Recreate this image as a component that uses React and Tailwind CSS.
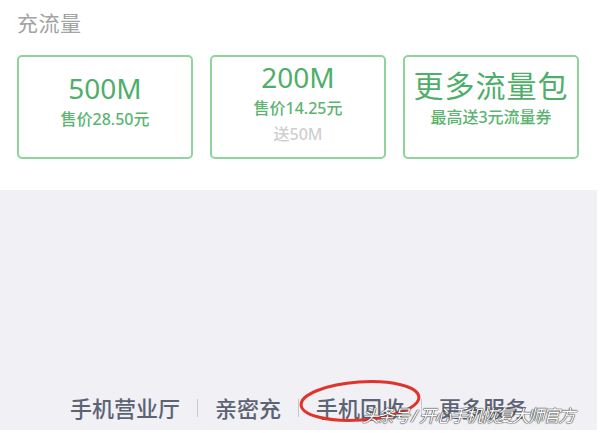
const cards = [
  { title: "500M", lines: [{ text: "售价28.50元", muted: false }], pt: "pt-[13px]" },
  {
    title: "200M",
    lines: [
      { text: "售价14.25元", muted: false },
      { text: "送50M", muted: true },
    ],
    pt: "pt-[2px]",
  },
  { title: "更多流量包", lines: [{ text: "最高送3元流量券", muted: false }], pt: "pt-[11px]", cjk: true },
];

const links = ["手机营业厅", "亲密充", "手机回收", "更多服务"];

const App = () => {
  return (
    <div
      className="relative w-[600px] h-[433px] overflow-hidden flex flex-col bg-white"
      style={{ fontFamily: '"Noto Sans", "Noto Sans CJK SC", sans-serif' }}
    >
      <div className="bg-white px-[17px] pt-[7px] h-[190px] shrink-0">
        <h2 className="text-[21px] leading-[32px] text-[#a3a3a3] tracking-[0.5px]">充流量</h2>
        <div className="mt-[16px] flex gap-[17px]">
          {cards.map((c) => (
            <div
              key={c.title}
              className={`w-[176px] h-[104px] border-2 border-[#8fd49b] rounded-[5px] flex flex-col items-center ${c.pt}`}
            >
              <p
                className={`text-[#4fae6a] leading-[36px] ${
                  c.cjk ? "text-[30px] tracking-[1px]" : "text-[28px]"
                }`}
              >
                {c.title}
              </p>
              {c.lines.map((l) => (
                <p
                  key={l.text}
                  className={`text-[16px] leading-[26px] font-medium ${
                    l.muted ? "text-[#cfcfcf]" : "text-[#5bb46f]"
                  }`}
                >
                  {l.text}
                </p>
              ))}
            </div>
          ))}
        </div>
      </div>

      <div className="flex-1 bg-[#f0f0f5] mr-[3px] mb-[3px] flex items-end justify-center pb-[7px]">
        <div className="flex items-center text-[22px] leading-[30px] font-medium text-[#5c6374]">
          {links.map((l, i) => (
            <div key={l} className="flex items-center">
              {i > 0 && <span className="mx-[17px] w-px h-[18px] bg-[#c7c9d2]" />}
              <span>{l}</span>
            </div>
          ))}
        </div>
      </div>

      <svg
        className="absolute left-[296px] top-[376px]"
        width="128"
        height="52"
        viewBox="0 0 128 52"
      >
        <ellipse
          cx="64"
          cy="25"
          rx="59"
          ry="19"
          transform="rotate(-4 64 25)"
          fill="none"
          stroke="#e0332d"
          strokeWidth="3"
        />
      </svg>

      <p
        className="absolute left-[362px] top-[403px] text-[17px] leading-[26px] italic text-white whitespace-nowrap tracking-[-1.5px]"
        style={{ textShadow: "0 0 1px #333, 0 0 1px #333, 0 0 1px #333" }}
      >
        头条号 / 开心手机恢复大师官方
      </p>
    </div>
  );
};

export default App;
